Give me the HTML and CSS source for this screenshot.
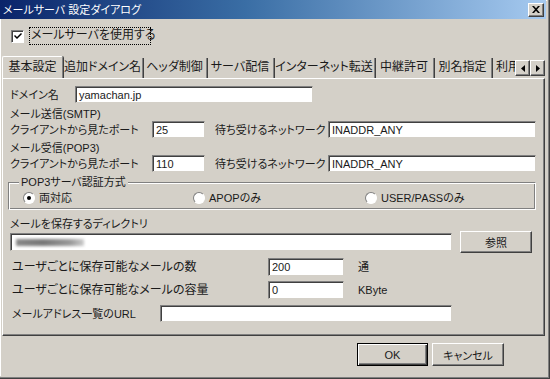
FILE: index.html
```html
<!DOCTYPE html>
<html lang="ja">
<head>
<meta charset="utf-8">
<link rel="stylesheet" href="styles.css">
</head>
<body>
<div class="window">
  <div class="titlebar">
    <span class="title">メールサーバ 設定ダイアログ</span>
    <span class="close"><svg width="8" height="7" viewBox="0 0 8 7"><path d="M0 0h2l2 2.2L6 0h2L5 3.5 8 7H6L4 4.8 2 7H0l3-3.5z" fill="#000"/></svg></span>
  </div>
  <div class="client">
    <div class="check-row">
      <span class="checkbox"><svg width="8" height="8" viewBox="0 0 8 8"><path d="M0 3l1-1 2 2 4-4 1 1-5 5z" fill="#000"/></svg></span>
      <span class="focus">メールサーバを使用する</span>
    </div>
    <div class="tabstrip">
      <div class="tabs">
        <div class="tab sel w1">基本設定</div>
        <div class="tab w2">追加ドメイン名</div>
        <div class="tab w3">ヘッダ制御</div>
        <div class="tab w4">サーバ配信</div>
        <div class="tab w5">インターネット転送</div>
        <div class="tab w6">中継許可</div>
        <div class="tab w7">別名指定</div>
        <div class="tab w8">利用者</div>
      </div>
      <div class="arrows">
        <span class="arr"><svg width="4" height="7" viewBox="0 0 4 7"><path d="M4 0v7L0 3.5z" fill="#000"/></svg></span>
        <span class="arr"><svg width="4" height="7" viewBox="0 0 4 7"><path d="M0 0v7l4-3.5z" fill="#000"/></svg></span>
      </div>
    </div>
    <div class="panel">
      <div class="row r-domain">
        <span class="lbl l-domain">ドメイン名</span>
        <div class="edit e-domain">yamachan.jp</div>
      </div>
      <div class="line l-smtp">メール送信(SMTP)</div>
      <div class="row r-port">
        <span class="lbl l-port">クライアントから見たポート</span>
        <div class="edit e-port">25</div>
        <span class="lbl l-net">待ち受けるネットワーク</span>
        <div class="edit e-net">INADDR_ANY</div>
      </div>
      <div class="line l-pop">メール受信(POP3)</div>
      <div class="row r-port">
        <span class="lbl l-port">クライアントから見たポート</span>
        <div class="edit e-port">110</div>
        <span class="lbl l-net">待ち受けるネットワーク</span>
        <div class="edit e-net">INADDR_ANY</div>
      </div>
      <div class="group">
        <span class="legend">POP3サーバ認証方式</span>
        <div class="radios">
          <span class="radio-item ri1"><span class="radio on"></span>両対応</span>
          <span class="radio-item ri2"><span class="radio"></span>APOPのみ</span>
          <span class="radio-item"><span class="radio"></span>USER/PASSのみ</span>
        </div>
      </div>
      <div class="line l-dir">メールを保存するディレクトリ</div>
      <div class="row r-dir">
        <div class="edit e-dir"><span class="blur"></span></div>
        <div class="btn b-ref">参照</div>
      </div>
      <div class="row r-count">
        <span class="lbl l-count">ユーザごとに保存可能なメールの数</span>
        <div class="edit e-count">200</div>
        <span class="unit">通</span>
      </div>
      <div class="row r-cap">
        <span class="lbl l-count">ユーザごとに保存可能なメールの容量</span>
        <div class="edit e-count">0</div>
        <span class="unit">KByte</span>
      </div>
      <div class="row r-url">
        <span class="lbl l-url">メールアドレス一覧のURL</span>
        <div class="edit e-url"></div>
      </div>
    </div>
    <div class="btnrow">
      <div class="btn b-ok">OK</div>
      <div class="btn b-cancel">キャンセル</div>
    </div>
  </div>
</div>
</body>
</html>
```

FILE: styles.css
```css
html, body {
  margin: 0;
  padding: 0;
  background: #d4d0c8;
}
body {
  font-family: "Liberation Sans", "Noto Sans CJK JP", sans-serif;
  font-size: 11px;
  color: #1a1a1a;
  font-feature-settings: "palt" 1;
}
.window {
  width: 550px;
  height: 379px;
  box-sizing: border-box;
  background: #d4d0c8;
  border-right: 1px solid #404040;
  border-bottom: 1px solid #404040;
  box-shadow: inset -1px -1px #808080, inset -2px -2px #d4d0c8, inset 1px 1px #ffffff;
  overflow: hidden;
}
.titlebar {
  height: 19px;
  margin-right: 3px;
  background: linear-gradient(to right, #0a246a, #3a6ea5 45%, #a6caf0);
  display: flex;
  align-items: center;
  justify-content: space-between;
  padding: 0 2px 0 3px;
}
.title {
  color: #fff;
  font-size: 11px;
  line-height: 14px;
}
.close {
  width: 16px;
  height: 14px;
  box-sizing: border-box;
  background: #d4d0c8;
  border-top: 1px solid #fff;
  border-left: 1px solid #fff;
  border-right: 1px solid #404040;
  border-bottom: 1px solid #404040;
  box-shadow: inset -1px -1px #808080;
  display: flex;
  align-items: center;
  justify-content: center;
}
.client {
  padding-left: 2px;
}
.check-row {
  display: flex;
  align-items: center;
  height: 16px;
  margin-top: 9px;
  padding-left: 9px;
}
.checkbox {
  width: 13px;
  height: 13px;
  box-sizing: border-box;
  background: #fff;
  border-top: 1px solid #808080;
  border-left: 1px solid #808080;
  border-right: 1px solid #fff;
  border-bottom: 1px solid #fff;
  box-shadow: inset 1px 1px #404040;
  display: flex;
  align-items: center;
  justify-content: center;
  padding: 1px 0 0 1px;
}
.focus {
  margin-left: 6px;
  height: 16px;
  width: 120px;
  line-height: 15px;
  box-sizing: border-box;
  outline: 1px dotted #000;
  padding: 0 1px;
  font-size: 12px;
  white-space: nowrap;
}
.tabstrip {
  display: flex;
  align-items: flex-end;
  height: 22px;
  margin-top: 12px;
  width: 543px;
}
.tabs {
  display: flex;
  align-items: flex-end;
  width: 513px;
  overflow: hidden;
  height: 22px;
}
.tab {
  flex: none;
  height: 20px;
  box-sizing: border-box;
  border-right: 1px solid #808080;
  box-shadow: 1px 0 #404040;
  line-height: 19px;
  text-align: center;
  white-space: nowrap;
  font-size: 12px;
}
.tab.sel {
  height: 22px;
  border-top: 1px solid #fff;
  border-left: 1px solid #fff;
  border-radius: 2px 2px 0 0;
  line-height: 21px;
}
.w1 { width: 61px; }
.w2 { width: 80px; }
.w3 { width: 64px; }
.w4 { width: 67px; }
.w5 { width: 101px; }
.w6 { width: 59px; }
.w7 { width: 58px; }
.w8 { width: 23px; text-align: left; padding-left: 4px; overflow: hidden; border-right: none; box-shadow: none; }
.arrows {
  display: flex;
  margin-bottom: 2px;
}
.arr {
  width: 15px;
  height: 16px;
  box-sizing: border-box;
  background: #d4d0c8;
  border-top: 1px solid #fff;
  border-left: 1px solid #fff;
  border-right: 1px solid #404040;
  border-bottom: 1px solid #404040;
  box-shadow: inset -1px -1px #808080;
  display: flex;
  align-items: center;
  justify-content: center;
}
.panel {
  width: 543px;
  height: 258px;
  box-sizing: border-box;
  border-left: 1px solid #fff;
  border-top: 1px solid #fff;
  border-right: 1px solid #404040;
  border-bottom: 1px solid #404040;
  box-shadow: inset -1px -1px #808080;
  padding-left: 7px;
}
.row {
  display: flex;
  align-items: center;
}
.lbl, .line, .unit {
  line-height: 14px;
  white-space: nowrap;
}
.edit {
  box-sizing: border-box;
  background: #fff;
  border-top: 1px solid #808080;
  border-left: 1px solid #808080;
  border-right: 1px solid #d4d0c8;
  border-bottom: 1px solid #d4d0c8;
  box-shadow: inset 1px 1px #404040;
  padding: 0 0 0 3px;
  display: flex;
  align-items: center;
  white-space: nowrap;
}
.r-domain { margin-top: 7px; height: 17px; }
.l-domain { width: 65px; }
.e-domain { width: 238px; height: 17px; }
.l-smtp { margin-top: 4px; }
.line { height: 14px; }
.r-port { height: 17px; }
.l-port { width: 142px; }
.e-port { width: 53px; height: 17px; }
.l-net { width: 113px; margin-left: 10px; }
.e-net { width: 208px; height: 17px; }
.l-pop { margin-top: 3px; }
.group {
  position: relative;
  margin-top: 10px;
  margin-left: -2px;
  width: 528px;
  height: 28px;
  box-sizing: border-box;
  border-top: 1px solid #808080;
  border-left: 1px solid #808080;
  border-right: 1px solid #fff;
  border-bottom: 1px solid #fff;
  box-shadow: inset 1px 1px #fff, inset -1px -1px #808080;
}
.legend {
  position: absolute;
  top: -8px;
  left: 10px;
  background: #d4d0c8;
  padding: 0 2px;
  line-height: 14px;
}
.radios {
  display: flex;
  align-items: center;
  padding: 8px 0 0 14px;
  height: 14px;
}
.radio-item {
  display: flex;
  align-items: center;
  line-height: 14px;
}
.ri1 { width: 170px; }
.ri2 { width: 172px; }
.radio {
  width: 12px;
  height: 12px;
  box-sizing: border-box;
  border-radius: 50%;
  background: #fff;
  border: 1px solid;
  border-color: #808080 #fff #fff #808080;
  margin-right: 4px;
  position: relative;
}
.radio.on::after {
  content: "";
  position: absolute;
  left: 3px;
  top: 3px;
  width: 4px;
  height: 4px;
  border-radius: 50%;
  background: #000;
}
.l-dir { margin-top: 7px; }
.r-dir { height: 22px; }
.e-dir { width: 442px; height: 18px; }
.blur {
  display: block;
  width: 68px;
  height: 7px;
  margin-left: 2px;
  background: linear-gradient(to right, #888, #777 40%, #999 80%, #ccc);
  filter: blur(1.5px);
}
.btn {
  box-sizing: border-box;
  background: #d4d0c8;
  border-top: 1px solid #fff;
  border-left: 1px solid #fff;
  border-right: 1px solid #404040;
  border-bottom: 1px solid #404040;
  box-shadow: inset -1px -1px #808080;
  display: flex;
  align-items: center;
  justify-content: center;
}
.b-ref { width: 72px; height: 22px; margin-left: 8px; }
.r-count { margin-top: 5px; height: 18px; }
.r-cap { margin-top: 5px; height: 18px; }
.l-count { width: 258px; padding-left: 2px; box-sizing: border-box; font-size: 12px; }
.e-count { width: 76px; height: 18px; }
.unit { margin-left: 14px; }
.r-url { margin-top: 6px; height: 17px; }
.l-url { width: 150px; padding-left: 2px; box-sizing: border-box; }
.e-url { width: 292px; height: 17px; }
.btnrow {
  display: flex;
  margin-top: 7px;
  padding-left: 355px;
  gap: 4px;
}
.b-ok {
  width: 71px;
  height: 23px;
  border: 1px solid #000;
  box-shadow: inset 1px 1px #fff, inset -1px -1px #404040, inset -2px -2px #808080;
}
.b-cancel {
  width: 72px;
  height: 23px;
}
```
